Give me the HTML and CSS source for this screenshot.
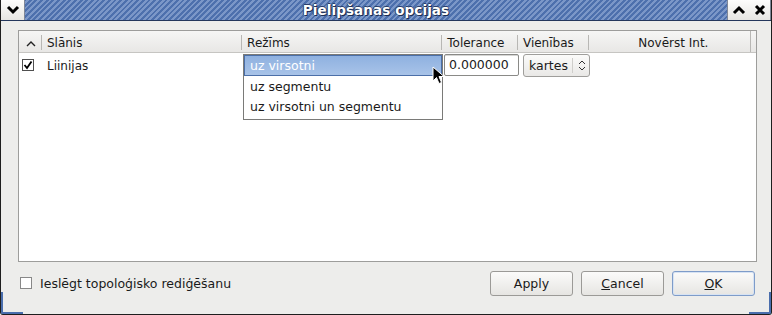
FILE: index.html
```html
<!DOCTYPE html>
<html lang="lv">
<head>
    <meta charset="UTF-8">
    <title>Pielipšanas opcijas</title>
    <link rel="stylesheet" href="styles.css">
</head>
<body>

    <div class="window">
        <!-- virsraksta josla -->
        <div class="titlebar">
            <div class="tb-btn">
                <svg width="14" height="10" viewBox="0 0 14 10"><path d="M2 2 L7 7 L12 2" fill="none" stroke="#000" stroke-width="3"/></svg>
            </div>
            <div class="title">Pielipšanas opcijas</div>
            <div class="tb-btn">
                <svg width="14" height="10" viewBox="0 0 14 10"><path d="M2 8 L7 3 L12 8" fill="none" stroke="#000" stroke-width="3"/></svg>
            </div>
            <div class="tb-btn">
                <svg width="12" height="12" viewBox="0 0 12 12"><path d="M2 2 L10 10 M10 2 L2 10" fill="none" stroke="#000" stroke-width="3"/></svg>
            </div>
        </div>

        <div class="content">
            <div class="table">
                <div class="thead">
                    <div class="th col-sort">
                        <svg width="10" height="7" viewBox="0 0 10 7"><path d="M1 6 L5 2 L9 6" fill="none" stroke="#222" stroke-width="1.4"/></svg>
                    </div>
                    <div class="th col-layer">Slānis</div>
                    <div class="th col-mode">Režīms</div>
                    <div class="th col-tol">Tolerance</div>
                    <div class="th col-unit">Vienības</div>
                    <div class="th col-inter">Novērst Int.</div>
                    <div class="th col-rest"></div>
                </div>

                <div class="row">
                    <div class="td col-sort"><span class="check checked">
                        <svg width="10" height="10" viewBox="0 0 10 10"><path d="M1.5 5 L4 8 L8.5 1.5" fill="none" stroke="#000" stroke-width="1.8"/></svg>
                    </span></div>
                    <div class="td col-layer">Liinijas</div>
                    <div class="td col-mode"></div>
                    <div class="td col-tol"><div class="entry">0.000000</div></div>
                    <div class="td col-unit">
                        <div class="combo">
                            <span>kartes</span>
                            <span class="combo-arrows">
                                <svg width="8" height="11" viewBox="0 0 8 11"><path d="M1 4 L4 1 L7 4 M1 7 L4 10 L7 7" fill="none" stroke="#333" stroke-width="1"/></svg>
                            </span>
                        </div>
                    </div>
                </div>

                <!-- atvērtais saraksts -->
                <div class="popup">
                    <div class="item selected">uz virsotni</div>
                    <div class="item">uz segmentu</div>
                    <div class="item">uz virsotni un segmentu</div>
                </div>

                <svg class="cursor" width="14" height="20" viewBox="0 0 14 20">
                    <path d="M1 1 L1 15 L4.5 11.5 L7 17.5 L9.5 16.5 L7 10.5 L12 10.5 Z" fill="#000" stroke="#fff" stroke-width="1"/>
                </svg>
            </div>

            <div class="footer">
                <label class="topo">
                    <span class="check"></span>
                    Ieslēgt topoloģisko rediģēšanu
                </label>
                <div class="buttons">
                    <button class="btn">Apply</button>
                    <button class="btn"><u>C</u>ancel</button>
                    <button class="btn default"><u>O</u>K</button>
                </div>
            </div>
        </div>

        <span class="grip grip-left"></span>
        <span class="grip grip-right"></span>
    </div>

</body>
</html>
```

FILE: styles.css
```css
/* PAMATA */
* { margin: 0; padding: 0; box-sizing: border-box; }
body { font-family: 'DejaVu Sans', sans-serif; font-size: 12px; color: #1a1a1a; background: #fff; }

.window {
    width: 772px;
    height: 315px;
    display: flex;
    flex-direction: column;
    background: #ededeb;
    border: 1px solid #1e1e1e;
    border-top: none;
    border-radius: 0 0 3px 3px;
    overflow: hidden;
    position: relative;
}

/* stūru izcēlumi (izmēra maiņa) */
.grip {
    position: absolute;
    bottom: 0;
    width: 22px;
    height: 22px;
    border-bottom: 2px solid #4a6ead;
}
.grip-left { left: 0; border-left: 2px solid #4a6ead; }
.grip-right { right: 0; border-right: 2px solid #4a6ead; }

/* VIRSRAKSTS */
.titlebar {
    height: 21px;
    display: flex;
    align-items: stretch;
    background: repeating-linear-gradient(135deg, #4d70ad 0 2px, #7b97c8 2px 4px);
    border-bottom: 1px solid #24375c;
}

.tb-btn {
    width: 22px;
    display: flex;
    align-items: center;
    justify-content: center;
    background: linear-gradient(#fdfdfc, #e6e5e2);
    border-right: 1px solid #7f8797;
}
.titlebar .tb-btn:first-child { width: 24px; }
.title + .tb-btn { border-left: 1px solid #7f8797; border-right: none; }
.titlebar .tb-btn:last-child { border-right: 1px solid #7f8797; }

.title {
    flex: 1;
    text-align: center;
    color: #fff;
    font-weight: bold;
    font-size: 13.5px;
    line-height: 20px;
    letter-spacing: 0.1px;
    text-shadow: 1px 1px 0 #1c2d52, -1px 0 0 #2a3f6b, 0 -1px 0 #2a3f6b;
}

.content {
    flex: 1;
    display: flex;
    flex-direction: column;
    padding: 9px 14px 0 17px;
}

/* TABULA */
.table {
    height: 232px;
    background: #fff;
    border: 1px solid #9d9d9b;
    position: relative;
}

.thead, .row { display: flex; }

.thead {
    height: 22px;
    background: linear-gradient(#f6f6f5, #e8e7e5);
    border-bottom: 1px solid #c6c5c2;
}

.th {
    padding-top: 3px;
    line-height: 18px;
    padding-left: 5px;
    position: relative;
    white-space: nowrap;
}
.th::after {
    content: "";
    position: absolute;
    right: 0;
    top: 4px;
    height: 15px;
    border-right: 1px solid #b8b7b4;
}
.th.col-rest::after, .th.col-inter::after { display: none; }

.col-sort { width: 23px; }
.col-layer { width: 201px; }
.col-mode { width: 201px; }
.col-tol { width: 76px; }
.col-unit { width: 71px; }
.col-inter { width: 163px; }
.col-rest { flex: 1; }

.th.col-sort { display: flex; align-items: center; padding-left: 7px; }
.th.col-inter { text-align: center; padding-left: 8px; border-right: 1px solid #b8b7b4; }

.row { height: 24px; align-items: flex-start; }
.td { padding-left: 4px; white-space: nowrap; }
.td.col-layer { padding: 6px 0 0 5px; line-height: 14px; }
.td.col-sort { padding: 6px 0 0 3px; display: flex; }

.check {
    width: 12px;
    height: 12px;
    border: 1px solid #666;
    background: #fff;
    display: flex;
    align-items: center;
    justify-content: center;
}
.check.checked { border-color: #4f4f4f; }

.entry {
    width: 75px;
    height: 22px;
    margin-left: -4px;
    margin-top: 1px;
    border: 1px solid #8a8a87;
    border-radius: 2px;
    padding: 0 4px;
    line-height: 20px;
    font-size: 12.5px;
    background: #fff;
    box-shadow: inset 0 1px 0 #d6d6d4;
}

.combo {
    width: 67px;
    height: 23px;
    margin-left: -1px;
    margin-top: 1px;
    border: 1px solid #9f9e9b;
    border-radius: 3px;
    background: linear-gradient(#fbfbfa, #e9e8e6);
    display: flex;
    align-items: center;
    padding-left: 5px;
    font-size: 12.5px;
}
.combo-arrows {
    margin-left: 4px;
    padding-left: 5px;
    border-left: 1px solid #cfcecb;
    height: 15px;
    display: flex;
    align-items: center;
}

/* SARAKSTS */
.popup {
    position: absolute;
    left: 224px;
    top: 23px;
    width: 200px;
    background: #fff;
    border: 1px solid #7a7a78;
    padding-bottom: 2px;
}
.popup .item {
    height: 20px;
    line-height: 19px;
    padding-left: 6px;
    font-size: 12.5px;
    white-space: nowrap;
}
.popup .item.selected {
    height: 21px;
    color: #fff;
    background: linear-gradient(#8fb1e0, #a8c3e8);
    border: 1px solid #4b6fa8;
    padding-left: 5px;
    margin-bottom: 1px;
}

.cursor { position: absolute; left: 413px; top: 35px; }

/* APAKŠA */
.footer {
    flex: 1;
    display: flex;
    justify-content: space-between;
    align-items: center;
    padding-bottom: 10px;
}

.topo {
    display: flex;
    align-items: center;
    gap: 8px;
    padding-left: 2px;
    font-size: 12.5px;
}
.topo .check { border-color: #888; }

.buttons { display: flex; gap: 8px; margin-right: 2px; }

.btn {
    width: 83px;
    height: 25px;
    font-family: inherit;
    font-size: 12.5px;
    color: #1a1a1a;
    border: 1px solid #9b9a97;
    border-radius: 3px;
    background: linear-gradient(#fbfbfa, #e6e5e2);
}
.btn.default { border-color: #7e9cc9; box-shadow: inset 0 0 0 1px #d7e3f3; }
```
